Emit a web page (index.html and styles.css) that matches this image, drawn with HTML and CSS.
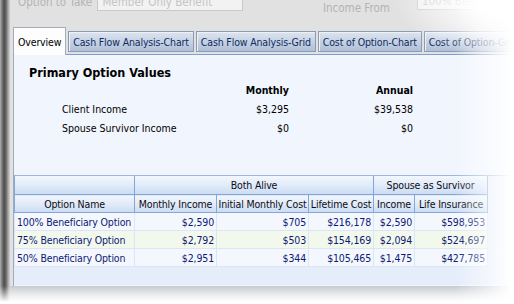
FILE: index.html
```html
<!DOCTYPE html>
<html lang="en">
<head>
    <meta charset="UTF-8">
    <title>Option Overview</title>
    <link rel="stylesheet" href="styles.css">
</head>
<body>
<div class="screen">
    <div class="edge"></div>
    <div class="window">
        <!-- form fields above the tabs, cut off by the capture -->
        <div class="formbar">
            <span class="flabel">Option to Take</span>
            <span class="fbox wide">Member Only Benefit</span>
            <span class="flabel income">Income From</span>
            <span class="fbox short">100% Beneficiary</span>
        </div>

        <div class="tabs">
            <div class="tab active">Overview</div>
            <div class="tab">Cash Flow Analysis-Chart</div>
            <div class="tab">Cash Flow Analysis-Grid</div>
            <div class="tab">Cost of Option-Chart</div>
            <div class="tab">Cost of Option-Grid</div>
        </div>

        <div class="panel">
            <h3 class="heading">Primary Option Values</h3>
            <div class="summary">
                <span></span>
                <span class="colhead">Monthly</span>
                <span class="colhead">Annual</span>

                <span class="label">Client Income</span>
                <span class="num">$3,295</span>
                <span class="num">$39,538</span>

                <span class="label">Spouse Survivor Income</span>
                <span class="num">$0</span>
                <span class="num">$0</span>
            </div>

            <div class="gridbox">
                <table class="grid">
                    <colgroup>
                        <col class="c-name">
                        <col class="c-mi">
                        <col class="c-imc">
                        <col class="c-lc">
                        <col class="c-inc">
                        <col class="c-li">
                    </colgroup>
                    <thead>
                        <tr class="band">
                            <th></th>
                            <th colspan="3">Both Alive</th>
                            <th colspan="2">Spouse as Survivor</th>
                        </tr>
                        <tr class="names">
                            <th>Option Name</th>
                            <th>Monthly Income</th>
                            <th>Initial Monthly Cost</th>
                            <th>Lifetime Cost</th>
                            <th>Income</th>
                            <th>Life Insurance</th>
                        </tr>
                    </thead>
                    <tbody>
                        <tr>
                            <td class="name">100% Beneficiary Option</td>
                            <td>$2,590</td>
                            <td>$705</td>
                            <td>$216,178</td>
                            <td>$2,590</td>
                            <td>$598,953</td>
                        </tr>
                        <tr class="alt">
                            <td class="name">75% Beneficiary Option</td>
                            <td>$2,792</td>
                            <td>$503</td>
                            <td>$154,169</td>
                            <td>$2,094</td>
                            <td>$524,697</td>
                        </tr>
                        <tr>
                            <td class="name">50% Beneficiary Option</td>
                            <td>$2,951</td>
                            <td>$344</td>
                            <td>$105,465</td>
                            <td>$1,475</td>
                            <td>$427,785</td>
                        </tr>
                    </tbody>
                </table>
            </div>
        </div>
        <div class="footer"></div>
    </div>
    <!-- white fade over right and bottom edges -->
    <div class="fade"></div>
</div>
</body>
</html>
```

FILE: styles.css
```css
body {
    margin: 0;
    background: #fff;
    font-family: "DejaVu Sans Condensed", "DejaVu Sans", sans-serif;
    font-stretch: condensed;
    font-size: 10.5px;
    color: #000;
}

.screen {
    position: relative;
    width: 514px;
    height: 304px;
    overflow: hidden;
    display: flex;
}

.edge {
    width: 10px;
    flex: none;
    background: linear-gradient(to right, #b0b0b0 0, #7a7a7a 2px, #4e4e4e 4px, #666 6px, #a2a2a2 8px, #d4d4d4 10px);
}

.window {
    flex: 1;
    min-width: 0;
    background: #e1e1e1;
    display: flex;
    flex-direction: column;
}

/* top form row */
.formbar {
    height: 27px;
    flex: none;
    display: flex;
    align-items: flex-start;
    color: #b3b3b3;
    font-size: 11.5px;
    overflow: hidden;
}
.flabel {
    margin: -5px 0 0 8px;
    width: 82px;
}
.flabel.income {
    margin: 1px 0 0 80px;
    width: 97px;
}
.fbox {
    background: #f2f2f2;
    border: 1px solid #c9c9c9;
    height: 16px;
    padding-left: 4px;
    color: #c4c4c4;
    box-sizing: border-box;
    white-space: nowrap;
    overflow: hidden;
}
.fbox.wide {
    width: 150px;
    margin-top: -5px;
    line-height: 12px;
}
.fbox.short {
    width: 100px;
    margin-top: -6px;
    line-height: 12px;
}

/* tabs */
.tabs {
    display: flex;
    align-items: flex-end;
    height: 27px;
    padding-left: 3px;
    gap: 2px;
    flex: none;
}
.tab {
    height: 21px;
    line-height: 20px;
    padding: 0 4px;
    margin-bottom: 2px;
    box-sizing: border-box;
    border: 1px solid #8d9bb0;
    box-shadow: inset 1px 1px 0 #eef2f8;
    background: linear-gradient(#dce4ef, #c3d1e4 55%, #aebfd8);
    color: #142a5c;
    letter-spacing: -0.15px;
    white-space: nowrap;
}
.tab.active {
    height: 28px;
    line-height: 28px;
    margin-bottom: -1px;
    padding: 0 4px;
    background: #fdfdfe;
    border-color: #a5adbb;
    border-bottom: none;
    box-shadow: none;
    color: #000;
    position: relative;
}

/* overview panel */
.panel {
    height: 231px;
    flex: none;
    background: #f1f5fd;
    border-top: 1px solid #7d9ed2;
    border-left: 1px solid #a3aab8;
    margin-left: 3px;
}
.heading {
    margin: 10px 0 0 15px;
    font-size: 12.5px;
    line-height: 15px;
    font-weight: bold;
}
.summary {
    display: grid;
    grid-template-columns: 175px 52px 124px;
    grid-auto-rows: 19px;
    align-items: center;
    padding-left: 48px;
}
.colhead {
    font-weight: bold;
    text-align: right;
    white-space: nowrap;
}
.num {
    text-align: right;
}

/* options grid */
.gridbox {
    margin-top: 38px;
    height: 109px;
    background: #e5edfa;
    border-top: 1px solid #9db6db;
}
.grid {
    border-collapse: collapse;
    table-layout: fixed;
    width: 473px;
    letter-spacing: -0.15px;
}
.c-name { width: 120px; }
.c-mi { width: 82px; }
.c-imc { width: 92px; }
.c-lc { width: 65px; }
.c-inc { width: 41px; }
.c-li { width: 73px; }

.grid th {
    font-weight: normal;
    padding: 0 1px;
    border: 1px solid #87a6d8;
    border-top: none;
    background: linear-gradient(#f3f7fd, #dde8f8 60%, #cbdcf3);
    color: #0c0c14;
    white-space: nowrap;
    overflow: hidden;
}
.grid .band th {
    height: 18px;
}
.grid .names th {
    height: 17px;
}
.grid td {
    height: 17px;
    padding: 0 2px 0 1px;
    border: 1px solid #dbe5f6;
    background: #f4f8fe;
    color: #0d1a73;
    text-align: right;
    white-space: nowrap;
    overflow: hidden;
}
.grid tr.alt td {
    background: #f3f8ec;
}
.grid td.name {
    text-align: left;
    padding-left: 2px;
}

.footer {
    flex: 1;
    background: linear-gradient(#c5c9cf, #dde0e3);
}

.fade {
    position: absolute;
    inset: 0;
    pointer-events: none;
    background:
        linear-gradient(to bottom, rgba(255,255,255,0) 286px, #fff 302px),
        radial-gradient(ellipse 120px 60px at 514px 0, #fff 30%, rgba(255,255,255,0) 100%),
        linear-gradient(to right, rgba(255,255,255,0) 455px, rgba(255,255,255,0.6) 490px, #fff 512px);
}
```
